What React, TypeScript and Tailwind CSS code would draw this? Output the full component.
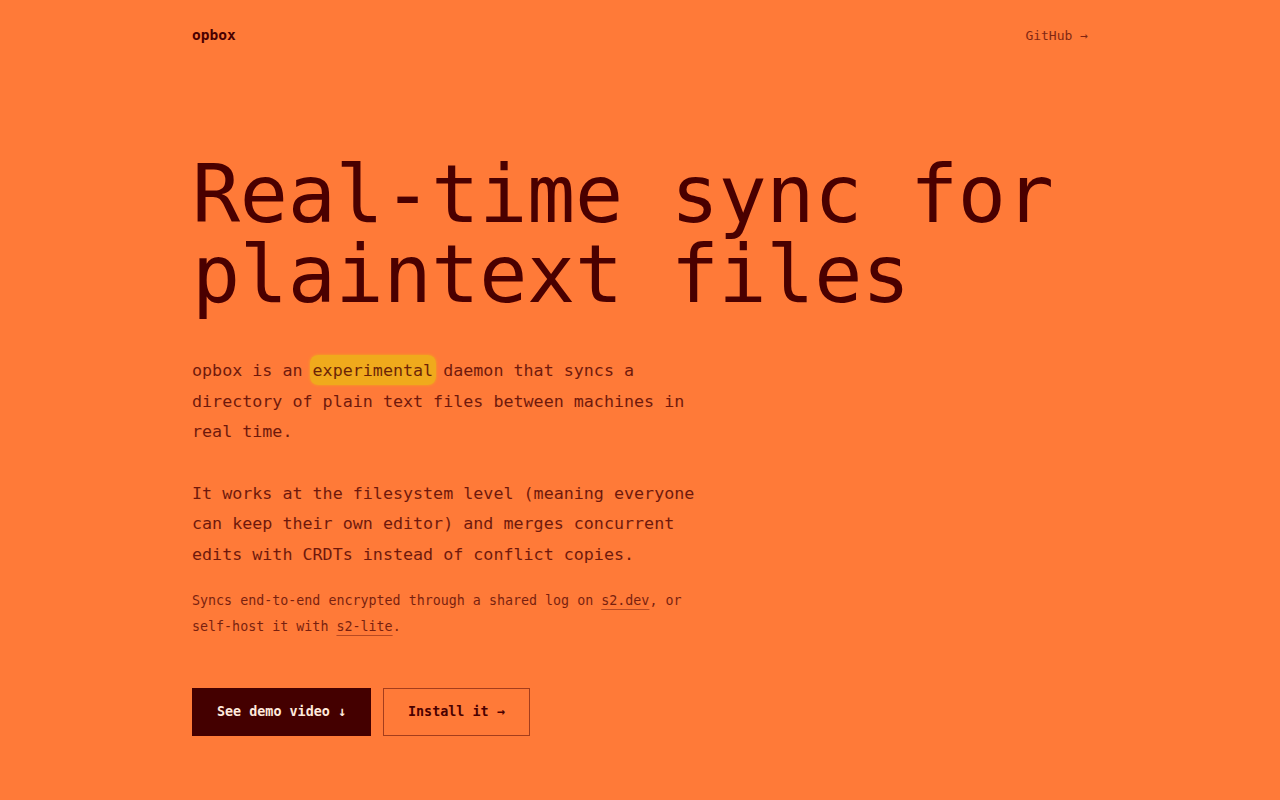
const mono = 'font-["DejaVu_Sans_Mono","Liberation_Mono",monospace]'

export default function App() {
  return (
    <div className={`min-h-screen bg-[#ff7a38] text-[#4a0000] ${mono}`}>
      <div className="mx-auto max-w-[896px]">
        <header className="flex h-[72px] items-center justify-between">
          <span className="text-[14.5px] font-bold">opbox</span>
          <a href="#" className="text-[13px] text-[#4a0000]/70">
            GitHub →
          </a>
        </header>

        <main className="pt-[83px]">
          <h1 className="mb-[40px] text-[80px] leading-[80px] font-normal tracking-[-0.3px]">
            Real-time sync for
            <br />
            plaintext files
          </h1>

          <div className="max-w-[520px] text-[16.7px] leading-[30.6px] text-[#4a0000]/80">
            <p className="mb-[31px]">
              opbox is an{' '}
              <span className="-mx-[3px] rounded-[8px] bg-[#f0aa1c] px-[3px] py-[5px] shadow-[0_0_3px_#f0aa1c]">
                experimental
              </span>{' '}
              daemon that syncs a directory of plain text files between machines in real time.
            </p>
            <p className="mb-[18px]">
              It works at the filesystem level (meaning everyone can keep their own editor) and merges
              concurrent edits with CRDTs instead of conflict copies.
            </p>
            <p className="text-[13.33px] leading-[26px] text-[#4a0000]/75">
              Syncs end-to-end encrypted through a shared log on{' '}
              <a href="#" className="underline decoration-[#4a0000]/40 underline-offset-[4px]">
                s2.dev
              </a>
              , or self-host it with{' '}
              <a href="#" className="underline decoration-[#4a0000]/40 underline-offset-[4px]">
                s2-lite
              </a>
              .
            </p>
          </div>

          <div className="mt-[48px] flex gap-3">
            <button className="h-12 bg-[#440000] px-[25px] text-[13.4px] font-bold text-[#ffe9dc]">
              See demo video ↓
            </button>
            <button className="h-12 border border-[#4a0000]/50 px-[24px] text-[13.4px] font-bold text-[#4a0000]">
              Install it →
            </button>
          </div>
        </main>
      </div>
    </div>
  )
}
